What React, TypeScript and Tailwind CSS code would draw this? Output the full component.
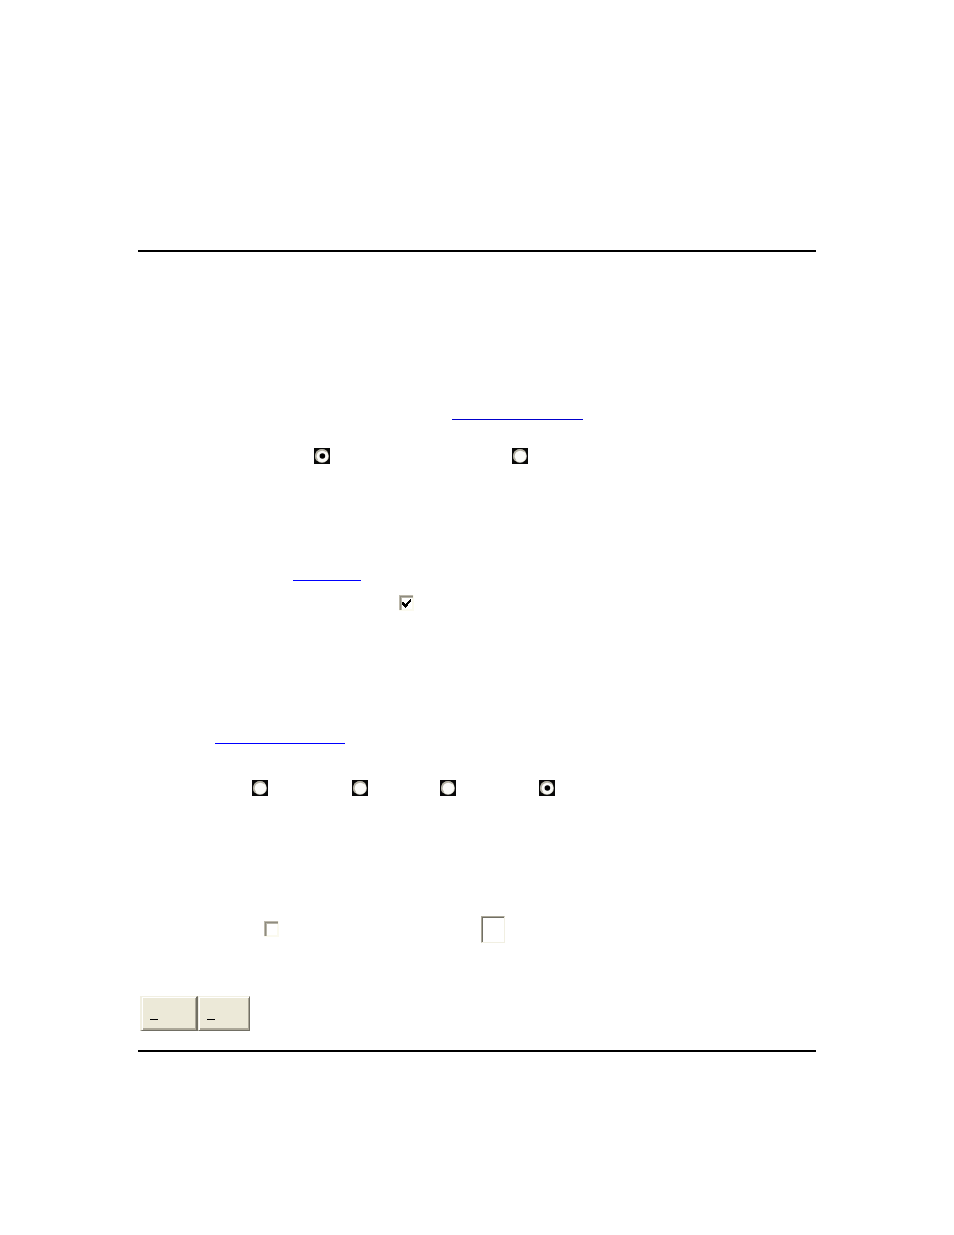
function Radio({ name, label, checked = false }: { name: string; label: string; checked?: boolean }) {
  return (
    <label className="relative block h-4 w-4 shrink-0 bg-[#080808]">
      <input
        type="radio"
        name={name}
        aria-label={label}
        defaultChecked={checked}
        className="peer absolute inset-0 m-0 h-4 w-4 cursor-pointer appearance-none"
      />
      <svg viewBox="0 0 16 16" className="pointer-events-none absolute inset-0 h-4 w-4 peer-checked:[&_.dot]:opacity-100">
        <circle cx="8" cy="8" r="6.8" fill="#e6e4d8" />
        <path d="M3 13A6.8 6.8 0 0 1 13 3Z" fill="#b5b2a5" />
        <circle cx="8.3" cy="8.3" r="5.6" fill="#fbfbf8" />
        <circle className="dot opacity-0" cx="8.4" cy="8" r="2.8" fill="#000" />
      </svg>
    </label>
  )
}

function Checkbox({ label, checked = false }: { label: string; checked?: boolean }) {
  return (
    <label className="relative block h-4 w-4 shrink-0">
      <input
        type="checkbox"
        aria-label={label}
        defaultChecked={checked}
        className="peer absolute inset-0 m-0 h-4 w-4 cursor-pointer appearance-none"
      />
      <svg
        viewBox="0 0 16 16"
        shapeRendering="crispEdges"
        className="pointer-events-none absolute inset-0 h-4 w-4 peer-checked:[&_.tick]:opacity-100"
      >
        <path d="M0 0h15v16H0Z" fill="#fbfaef" />
        <path d="M0 0h14v1H1v14H0Z" fill="#bdb9ac" />
        <path d="M1 1h13v1H2v13H1Z" fill="#8f8c80" />
        <path d="M2 2h12v1H3v12H2Z" fill="#b8b5a8" />
        <path d="M3 3h10v11H3Z" fill="#fff" />
        <path
          className="tick opacity-0"
          d="M3 7h2v1h1v1h1V8h1V7h1V6h1V5h1V4h1v3h-1v1h-1v1H9v2H8v1H7v1H6v-1H5v-1H4v-1H3Z"
          fill="#000"
        />
      </svg>
    </label>
  )
}

export default function App() {
  return (
    <div className="min-h-screen bg-white font-['Liberation_Sans',Arial,sans-serif] text-black">
      <main className="mx-[138px] pt-[250px]">
        <hr className="border-0 border-t-2 border-black" />

        <form onSubmit={(e) => e.preventDefault()}>
          <div className="flex pt-[152px] pl-[314px]">
            <a href="#options" aria-label="Options" className="block h-4 w-[131px] border-b border-[#0000cc]" />
          </div>

          <div className="flex gap-[182px] pt-7 pl-44">
            <Radio name="mode" label="First mode" checked />
            <Radio name="mode" label="Second mode" />
          </div>

          <div className="flex pt-[101px] pl-[155px]">
            <a href="#details" aria-label="Details" className="block h-4 w-[68px] border-b border-[#0000ff]" />
          </div>

          <div className="flex pt-[14px] pl-[261px]">
            <Checkbox label="Enable" checked />
          </div>

          <div className="flex pt-[117px] pl-[77px]">
            <a href="#settings" aria-label="Settings" className="block h-4 w-[130px] border-b border-[#0000ff]" />
          </div>

          <div className="flex pt-9 pl-[114px]">
            <div className="flex gap-[84px]">
              <Radio name="level" label="Level 1" />
              <Radio name="level" label="Level 2" />
            </div>
            <div className="flex gap-[83px] pl-[72px]">
              <Radio name="level" label="Level 3" />
              <Radio name="level" label="Level 4" checked />
            </div>
          </div>

          <div className="flex gap-[201px] pt-[120px] pl-[126px]">
            <div className="pt-[5px]">
              <Checkbox label="Use value" />
            </div>
            <input
              type="text"
              aria-label="Value"
              className="h-[27px] w-6 border border-t-[#aca899] border-r-[#f1efe2] border-b-[#f1efe2] border-l-[#aca899] bg-white px-px text-xs shadow-[inset_1px_1px_0_#716f64] outline-none"
            />
          </div>

          <div className="flex pt-[53px] pl-0.5">
            <button
              type="submit"
              aria-label="OK"
              className="flex h-[35px] w-[58px] items-end border-t border-r-2 border-b border-l-2 border-t-[#f1efe2] border-r-[#716f64] border-b-[#716f64] border-l-[#f1efe2] bg-[#ece9d8] pb-[10px] pl-2 shadow-[inset_1px_1px_0_#fff,inset_-1px_-2px_0_#aca899]"
            >
              <span className="block w-2 border-b border-black" />
            </button>
            <button
              type="button"
              aria-label="Cancel"
              className="flex h-[35px] w-[52px] items-end border border-t-[#f1efe2] border-r-[#716f64] border-b-[#716f64] border-l-[#f1efe2] bg-[#ece9d8] pb-[10px] pl-2 shadow-[inset_1px_1px_0_#fff,inset_-1px_-2px_0_#aca899]"
            >
              <span className="block w-2 border-b border-black" />
            </button>
          </div>
        </form>

        <hr className="mt-[19px] border-0 border-t-2 border-black" />
      </main>
    </div>
  )
}
